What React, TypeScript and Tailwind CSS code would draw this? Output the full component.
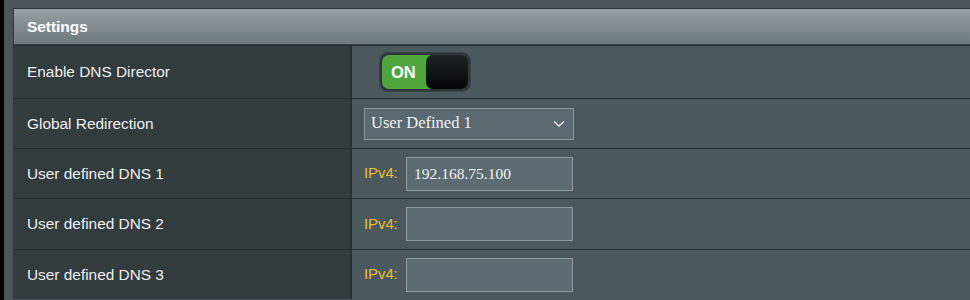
import { useState } from "react";

const sans = { fontFamily: '"Liberation Sans", Arial, sans-serif' };
const serif = { fontFamily: '"Liberation Serif", "Times New Roman", serif' };

function Row({ label, h, children }: { label: string; h: string; children: React.ReactNode }) {
  return (
    <div className={`flex ${h} border-t border-[#262d30]`}>
      <div className="w-[336px] shrink-0 flex items-center pl-[13px] bg-[#323b3e] text-[15.4px] text-[#eef0f0]">
        {label}
      </div>
      <div className="w-[2px] bg-[#263033]" />
      <div className="flex-1 flex items-center pl-[12px] bg-[#4b585d]">{children}</div>
    </div>
  );
}

function Ipv4({ value }: { value?: string }) {
  return (
    <div className="flex items-center">
      <span className="text-[14.8px] text-[#e8c02e] w-[42px]">IPv4:</span>
      <div
        className="w-[167px] h-[34px] border border-[#8d9a9e] bg-[#5d6c72] flex items-center pl-[7px] text-[15.5px] text-[#f2f2f2]"
        style={serif}
      >
        {value}
      </div>
    </div>
  );
}

export default function App() {
  const [on, setOn] = useState(true);

  return (
    <div className="w-[970px] h-[300px] bg-[#4c5559] flex overflow-hidden" style={sans}>
      <div className="w-[4px] bg-black shrink-0" />
      <div className="flex-1 pl-[9px] pt-[8px]">
        <div className="border-l border-t border-[#2f3639]">
          <div className="h-[36px] bg-gradient-to-b from-[#959fa4] to-[#6f7a7f] flex items-center pl-[13px] text-[15.4px] font-bold text-white border-b border-[#3a4245]">
            Settings
          </div>
          <Row label="Enable DNS Director" h="h-[53px]">
            <button
              onClick={() => setOn(!on)}
              className="ml-[15px] w-[92px] h-[40px] rounded-[9px] border border-[#3a4346] bg-[#2e3638] p-[2px] flex"
            >
              <div className="flex-1 flex rounded-[7px] overflow-hidden">
                <div className="w-[48px] bg-[#4ea53c] flex items-center pl-[9px] text-[16.5px] font-bold text-white">
                  ON
                </div>
                <div className="flex-1 -ml-[4px] rounded-[7px] bg-gradient-to-b from-[#1e2426] to-[#050707]" />
              </div>
            </button>
          </Row>
          <Row label="Global Redirection" h="h-[50px]">
            <div
              className="w-[210px] h-[32px] border border-[#8a979b] bg-[#5a6a70] flex items-center justify-between pl-[6px] pr-[8px] text-[16.5px] text-[#f2f2f2]"
              style={serif}
            >
              <span>User Defined 1</span>
              <svg width="12" height="8" viewBox="0 0 12 8" fill="none">
                <path d="M1 1.5 L6 6 L11 1.5" stroke="#e6eaec" strokeWidth="1.5" />
              </svg>
            </div>
          </Row>
          <Row label="User defined DNS 1" h="h-[50px]">
            <Ipv4 value="192.168.75.100" />
          </Row>
          <Row label="User defined DNS 2" h="h-[51px]">
            <Ipv4 />
          </Row>
          <Row label="User defined DNS 3" h="h-[50px]">
            <Ipv4 />
          </Row>
        </div>
      </div>
    </div>
  );
}
